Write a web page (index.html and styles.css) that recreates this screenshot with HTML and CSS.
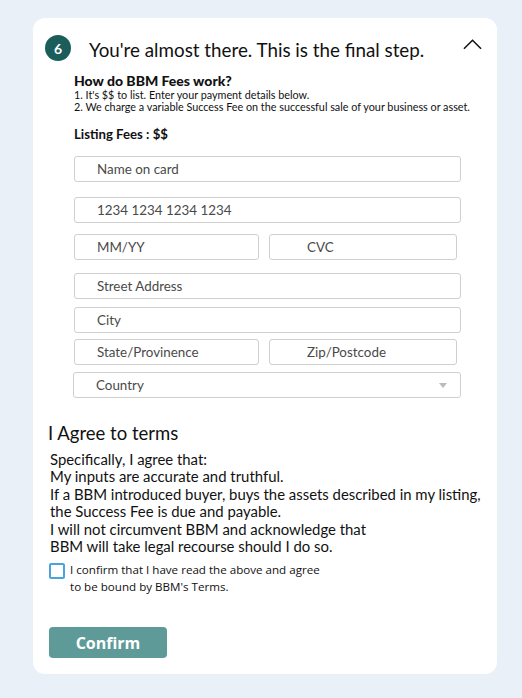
FILE: index.html
```html
<!DOCTYPE html>
<html>
<head>
<meta charset="utf-8">
<link rel="stylesheet" href="styles.css">
</head>
<body>
<div class="card">
  <div class="header">
    <span class="badge">6</span>
    <h1 class="title">You're almost there. This is the final step.</h1>
    <svg class="chev" width="20" height="11" viewBox="0 0 20 11"><path d="M1 10 L10 1 L19 10" fill="none" stroke="#111" stroke-width="1.6"/></svg>
  </div>
  <div class="fees">
    <h2 class="fees-title">How do BBM Fees work?</h2>
    <p class="fees-line">1. It's $$ to list. Enter your payment details below.</p>
    <p class="fees-line">2. We charge a variable Success Fee on the successful sale of your business or asset.</p>
    <p class="listing">Listing Fees : $$</p>
    <div class="field f-name"><span>Name on card</span></div>
    <div class="field f-num"><span>1234 1234 1234 1234</span></div>
    <div class="row r-exp">
      <div class="field half left"><span>MM/YY</span></div>
      <div class="field half right"><span class="cvc">CVC</span></div>
    </div>
    <div class="field f-street"><span>Street Address</span></div>
    <div class="field f-city"><span>City</span></div>
    <div class="row r-state">
      <div class="field half left"><span>State/Provinence</span></div>
      <div class="field half right"><span class="cvc">Zip/Postcode</span></div>
    </div>
    <div class="field f-country"><span>Country</span><i class="tri"></i></div>
  </div>
  <h2 class="terms-title">I Agree to terms</h2>
  <p class="terms">Specifically, I agree that:<br>My inputs are accurate and truthful.<br>If a BBM introduced buyer, buys the assets described in my listing,<br>the Success Fee is due and payable.<br>I will not circumvent BBM and acknowledge that<br>BBM will take legal recourse should I do so.</p>
  <label class="check">
    <span class="box"></span>
    <span class="check-text">I confirm that I have read the above and agree<br>to be bound by BBM's Terms.</span>
  </label>
  <button class="confirm">Confirm</button>
</div>
</body>
</html>
```
FILE: styles.css
```css
* { box-sizing: border-box; }
html, body { margin: 0; padding: 0; }
body {
  background: #eaf0f8;
  font-family: "Lato", "Liberation Sans", sans-serif;
  color: #111;
  width: 522px;
  height: 698px;
  padding-top: 18px;
}
.card {
  margin-left: 33px;
  width: 464px;
  height: 656px;
  background: #fff;
  border-radius: 12px;
  padding: 17px 12px 0 12px;
}
.header {
  display: flex;
  align-items: center;
  height: 26px;
}
.badge {
  width: 26px;
  height: 26px;
  border-radius: 50%;
  background: #1a5d5b;
  color: #fff;
  font-weight: 700;
  font-size: 14px;
  display: flex;
  align-items: center;
  justify-content: center;
}
.title {
  margin: 0 0 0 18px;
  font-weight: 400;
  font-size: 18.8px;
  flex: 1;
  padding-top: 2px;
}
.chev { margin-right: 3px; margin-top: -8px; width: 19px; }
.fees { padding-left: 29px; padding-top: 11px; }
.fees-title {
  margin: 0;
  font-size: 14px;
  font-weight: 900;
  line-height: 17px;
}
.fees-line {
  margin: 0;
  font-size: 10.8px;
  line-height: 12px;
}
.listing {
  margin: 14px 0 0 0;
  font-size: 13.2px;
  font-weight: 700;
  line-height: 15px;
}
.field {
  height: 26px;
  border: 1px solid #cfcfcf;
  border-radius: 3px;
  width: 387px;
  display: flex;
  align-items: center;
  padding-left: 22px;
  font-size: 13.4px;
  color: #4a4a4a;
  position: relative;
}
.f-name { margin-top: 14px; }
.f-num { margin-top: 15px; }
.row { display: flex; gap: 10px; width: 387px; }
.r-exp { margin-top: 11px; }
.half { width: 185px; }
.half.right { width: 188px; }
.cvc { padding-left: 15px; }
.f-street { margin-top: 13px; }
.f-city { margin-top: 8px; }
.r-state { margin-top: 6px; }
.f-country { margin-top: 7px; margin-left: -1px; width: 388px; }
.tri {
  position: absolute;
  right: 13px;
  top: 10px;
  width: 0;
  height: 0;
  border-left: 4px solid transparent;
  border-right: 4px solid transparent;
  border-top: 5px solid #bbb;
}
.terms-title {
  margin: 25px 0 0 3px;
  font-size: 18.5px;
  font-weight: 400;
  line-height: 20px;
}
.terms {
  margin: 8px 0 0 5px;
  font-size: 14.9px;
  line-height: 17.4px;
}
.check {
  display: flex;
  margin: 8px 0 0 4px;
  align-items: flex-start;
}
.box {
  width: 16px;
  height: 16px;
  border: 2px solid #4aa3dc;
  border-radius: 2px;
  flex-shrink: 0;
}
.check-text {
  margin-left: 5px;
  font-family: "Open Sans", "Liberation Sans", sans-serif;
  font-size: 11.6px;
  line-height: 17px;
  margin-top: -2px;
}
.confirm {
  display: block;
  margin: 32px 0 0 4px;
  width: 118px;
  height: 31px;
  background: #5e9b98;
  border: none;
  border-radius: 4px;
  color: #fff;
  font-family: "Open Sans", "Liberation Sans", sans-serif;
  font-weight: 700;
  font-size: 16px;
  padding: 0;
}
```
